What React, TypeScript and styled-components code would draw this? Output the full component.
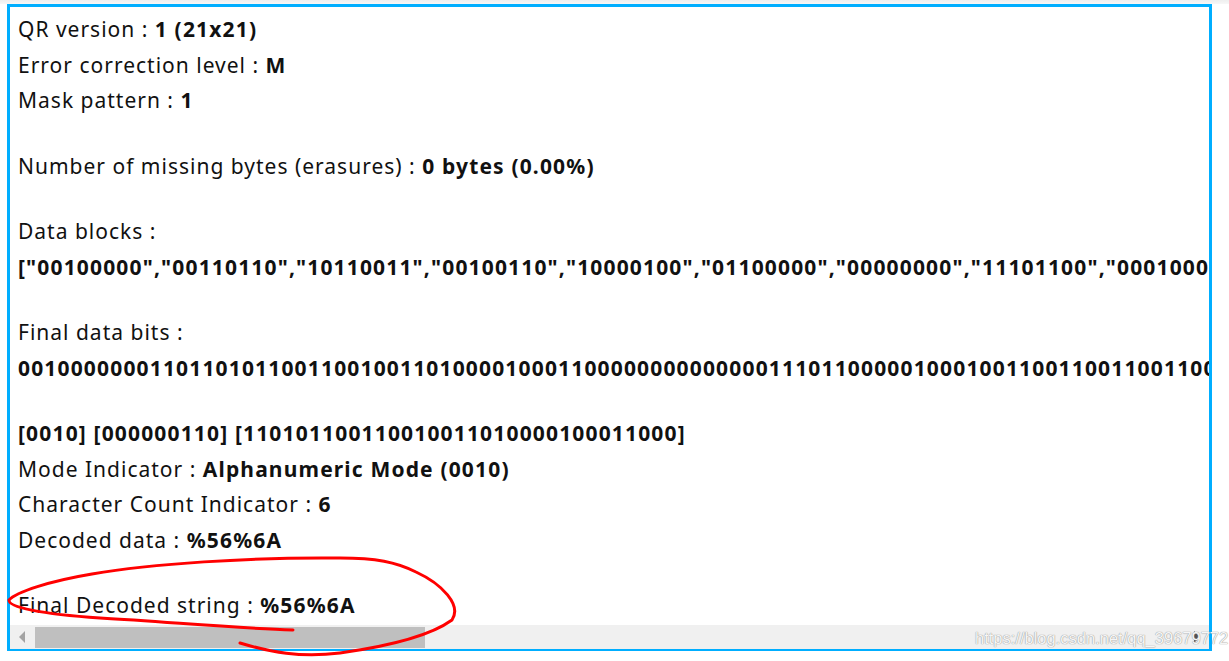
import React from "react";
import styled, { createGlobalStyle } from "styled-components";

const GlobalStyle = createGlobalStyle`
  html, body {
    margin: 0;
    padding: 0;
    background: #ffffff;
  }
  body {
    width: 1229px;
    height: 661px;
    overflow: hidden;
  }
`;

const Page = styled.div`
  position: relative;
  width: 1229px;
  height: 661px;
  display: flex;
  flex-direction: column;
`;

const TopStrip = styled.div`
  height: 4px;
  background: linear-gradient(#eeeeee, #f7f7f7);
`;

const Frame = styled.div`
  margin-left: 7px;
  width: 1199px;
  height: 642px;
  border: 3px solid #00aeff;
  border-bottom-width: 2px;
  display: flex;
  flex-direction: column;
  background: #ffffff;
`;

const Viewport = styled.div`
  flex: 1;
  overflow: hidden;
  padding: 5px 0 0 8px;
  font-family: "Noto Sans", "Open Sans", sans-serif;
  font-size: 21px;
  letter-spacing: 1px;
  color: #111111;
  white-space: nowrap;
`;

const Group = styled.div`
  margin-bottom: 30px;
`;

const Line = styled.div`
  height: 35.5px;
  line-height: 35.5px;
`;

const Value = styled.b`
  font-weight: 700;
  letter-spacing: 1.16px;
`;

const ScrollBar = styled.div`
  height: 24px;
  background: #f0f0f0;
  display: flex;
  align-items: center;
`;

const Arrow = styled.div<{ $dir: "left" | "right"; $dark?: boolean }>`
  width: 24px;
  height: 24px;
  display: flex;
  align-items: center;
  justify-content: center;
  &::before {
    content: "";
    width: 0;
    height: 0;
    border-top: 6px solid transparent;
    border-bottom: 6px solid transparent;
    ${({ $dir, $dark }) =>
      $dir === "left"
        ? `border-right: 6px solid ${$dark ? "#505050" : "#a3a3a3"};`
        : `border-left: 6px solid ${$dark ? "#505050" : "#a3a3a3"};`}
  }
`;

const Track = styled.div`
  flex: 1;
  height: 21px;
  display: flex;
`;

const Thumb = styled.div`
  width: 390px;
  margin-left: 1px;
  height: 100%;
  background: #bfbfbf;
`;

const Annotation = styled.svg`
  position: absolute;
  left: 0;
  top: 0;
  pointer-events: none;
`;

const Watermark = styled.div`
  position: absolute;
  left: 975px;
  top: 629px;
  font-family: "Liberation Sans", Arial, sans-serif;
  font-size: 16.5px;
  color: #f6f6f6;
  text-shadow: 0 0 1px #8a8a8a, 0 0 1px #b0b0b0;
  pointer-events: none;
`;

const App: React.FC = () => {
  return (
    <Page>
      <GlobalStyle />
      <TopStrip />
      <Frame>
        <Viewport>
          <Group>
            <Line>
              QR version : <Value>1 (21x21)</Value>
            </Line>
            <Line>
              Error correction level : <Value>M</Value>
            </Line>
            <Line>
              Mask pattern : <Value>1</Value>
            </Line>
          </Group>
          <Group>
            <Line>
              Number of missing bytes (erasures) : <Value>0 bytes (0.00%)</Value>
            </Line>
          </Group>
          <Group>
            <Line>Data blocks :</Line>
            <Line>
              <Value>
                ["00100000","00110110","10110011","00100110","10000100","01100000","00000000","11101100","00010001","11101100","00010001","11101100","00010001"]
              </Value>
            </Line>
          </Group>
          <Group>
            <Line>Final data bits :</Line>
            <Line>
              <Value>
                00100000001101101011001100100110100001000110000000000000011101100000100010011001100110011001100110011001100110011001100
              </Value>
            </Line>
          </Group>
          <Group>
            <Line>
              <Value>[0010] [000000110] [110101100110010011010000100011000]</Value>
            </Line>
            <Line>
              Mode Indicator : <Value>Alphanumeric Mode (0010)</Value>
            </Line>
            <Line>
              Character Count Indicator : <Value>6</Value>
            </Line>
            <Line>
              Decoded data : <Value>%56%6A</Value>
            </Line>
          </Group>
          <Line>
            Final Decoded string : <Value>%56%6A</Value>
          </Line>
        </Viewport>
        <ScrollBar>
          <Arrow $dir="left" />
          <Track>
            <Thumb />
          </Track>
          <Arrow $dir="right" $dark />
        </ScrollBar>
      </Frame>

      <Annotation width="1229" height="661" viewBox="0 0 1229 661">
        <path
          d="M 240 643 C 270 652, 300 658, 340 653 C 390 646, 430 636, 452 620 C 462 605, 442 584, 416 572 C 396 562, 376 558, 340 558 C 250 557, 150 564, 92 574 C 50 581, 16 592, 9 600 C 8 607, 40 614, 100 618 C 170 622, 232 628, 293 630"
          fill="none"
          stroke="#ff0000"
          strokeWidth="3"
          strokeLinecap="round"
          strokeLinejoin="round"
        />
      </Annotation>
      <Watermark>https://blog.csdn.net/qq_39679772</Watermark>
    </Page>
  );
};

export default App;
